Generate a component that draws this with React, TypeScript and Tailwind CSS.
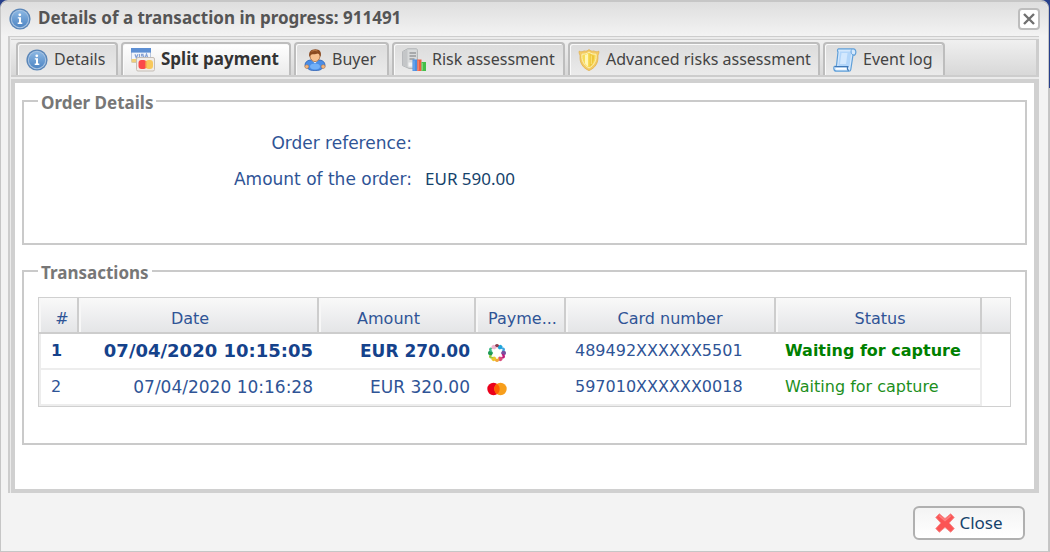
import type { ReactNode } from 'react';
import clsx from 'clsx';

const InfoIcon = () => (
  <svg viewBox="0 0 22 22" className="size-[22px] shrink-0" aria-hidden="true">
    <defs>
      <linearGradient id="info" x1="0" y1="0" x2="0" y2="1">
        <stop offset="0" stopColor="#8ab6e2" />
        <stop offset="1" stopColor="#4f86c4" />
      </linearGradient>
    </defs>
    <circle cx="11" cy="11" r="10.6" fill="#5a86b8" />
    <circle cx="11" cy="11" r="9.2" fill="#a9c4e2" />
    <circle cx="11" cy="11" r="8.2" fill="url(#info)" />
    <circle cx="10.800" cy="6.800" r="1.400" fill="#fff" />
    <path d="M8.800 9.200h3.200v5.400h1.300v1.400H8.700v-1.400h1.300v-4H8.800z" fill="#fff" />
  </svg>
);

const CardsIcon = () => (
  <svg viewBox="0 0 24 24" className="size-6 shrink-0" aria-hidden="true">
    <rect x="0.5" y="0.5" width="19" height="14" rx="1" fill="#f3f6fb" stroke="#b9c7de" />
    <path d="M0 0h20v4.6H0z" fill="#5d8fd3" />
    <path d="M.5 11h19v3.5H.5z" fill="#f0cf78" />
    <path d="M4 6.2l1.3 3.6 1.6-3.6M8.5 6v4M12.6 6.4h-2v1.5h2v1.7h-2.2M14 10l1.5-4 1.4 4" fill="none" stroke="#86a2d4" strokeWidth="1.2" />
    <rect x="5.5" y="9.5" width="18" height="13.5" rx="1.5" fill="#f1ede8" stroke="#c4bdb6" />
    <rect x="7.500" y="12" width="8" height="9" rx="3" fill="#fb4a4a" />
    <rect x="14.500" y="12" width="7.500" height="9" rx="3" fill="#f8c95c" />
    <path d="M14.800 13v7" stroke="#f98a48" strokeWidth="1.200" />
  </svg>
);

const BuyerIcon = () => (
  <svg viewBox="0 0 22 22" className="size-[22px] shrink-0" aria-hidden="true">
    <path d="M1 16.5C1 12.5 4 11 7.5 11h7c3.500 0 6.500 1.500 6.500 5.500 0 1.500-1 2.500-2.500 2.500-1 2-4 2.600-7.500 2.600S4.500 21 3.500 19C2 19 1 18 1 16.500z" fill="#4a8de6" stroke="#2e62b4" strokeWidth=".8" />
    <path d="M6 17.500c0-2 2-3 5-3s5 1 5 3-2 3-5 3-5-1-5-3z" fill="#73b0f7" />
    <circle cx="2.800" cy="17.600" r="1.900" fill="#f3b57d" stroke="#b9733b" strokeWidth=".5" />
    <circle cx="19.200" cy="17.600" r="1.900" fill="#f3b57d" stroke="#b9733b" strokeWidth=".5" />
    <path d="M7.500 11L11 14.200 14.500 11z" fill="#fff" />
    <ellipse cx="11" cy="7.300" rx="4.900" ry="5.300" fill="#f7c08e" stroke="#9a5a2a" strokeWidth=".7" />
    <path d="M5.400 8C4.200 3 7 .3 11.400.3c4.200 0 6.600 2.700 5.200 7.700-.6-1.800-1.500-3-2.600-3.500C11.500 5.500 7.500 5 6.600 6z" fill="#8a4a20" />
    <path d="M7.500 2.600c1.600-1.300 4-1.400 6-.6" stroke="#bd7a45" fill="none" />
  </svg>
);

const RiskIcon = () => (
  <svg viewBox="0 0 24 24" className="size-6 shrink-0" aria-hidden="true">
    <path d="M.6 3.600L5.500.8H14c1 0 1.400.6 1.400 1.400v18.200H7L.6 17.600z" fill="#d8dadb" stroke="#b0b3b5" />
    <path d="M.8 3.800L5.500 1.200v18.600l-4.700-2.200z" fill="#c4c6c8" />
    <path d="M7.500 5h6.500M7.500 8h6.500M7.500 11h5" stroke="#96999c" strokeWidth="1.400" />
    <path d="M6.500 14.500h4v4h-4z" fill="#f3f3f3" />
    <path d="M10.500 11.500h4.800V23h-4.800z" fill="#4b8fe2" />
    <path d="M15.300 11.500h4.200V23h-4.200z" fill="#ee5f45" />
    <path d="M19.500 14H24v9h-4.500z" fill="#45bf49" />
    <path d="M12 12.500v10" stroke="#7fb2f0" />
    <path d="M16.300 12.500v10" stroke="#f58d76" />
    <path d="M20.500 15v7.500" stroke="#7ad878" />
  </svg>
);

const ShieldIcon = () => (
  <svg viewBox="0 0 22 22" className="size-[22px] shrink-0" aria-hidden="true">
    <path d="M1.200 2.200c2 .9 3.600.7 4.800-.3C7.700 2.500 9.500 2 11 .6c1.500 1.400 3.300 1.900 5 1.300 1.200 1 2.800 1.200 4.800.3.400 2.200-.6 3-.9 4.600C20.600 14 17 19 11 21.600 5 19 1.400 14 2.100 6.800 1.800 5.200.8 4.400 1.200 2.200z" fill="#f3cb62" stroke="#e2b04c" strokeWidth=".8" />
    <path d="M4 5.200c3 .1 5-.6 7-2.200 2 1.600 4 2.300 7 2.200.8 6-1.800 11-7 13.800C5.800 16.200 3.200 11.200 4 5.200z" fill="#f7dc58" stroke="#fdf0b8" />
    <path d="M7 6v8.500c1 1.400 2 2.300 3 3V4.700C9 5.400 8 5.800 7 6z" fill="#fff6b8" />
    <path d="M11.600 4.500v13.600c2.600-2 4.600-5.500 4.600-11.600-1.800-.2-3.200-.9-4.600-2z" fill="#efc53a" />
    <path d="M13.300 6.500v8.500" stroke="#fbe57b" />
  </svg>
);

const ScrollIcon = () => (
  <svg viewBox="0 0 24 24" className="size-6 shrink-0" aria-hidden="true">
    <path d="M5.500.8h15c2.400 0 3.200 4.400 1.200 6.400L20 7l-2.200 14.500c-.2 1.200-.8 1.700-1.800 1.700H3.500C0 23.200.6 18.600 1.600 18.300h1.800L5 4C4.200 2.600 4.400 1.400 5.500.8z" fill="#d5e8fc" stroke="#5f9fd8" strokeWidth="1.200" />
    <path d="M7 3.500h11.400L16.500 18H5.300z" fill="#b3d6fa" />
    <path d="M8.500 5h6L13 16H7z" fill="#d3e8fe" />
    <path d="M1.800 18.600h13c-.8 1.500-.5 3 .8 4.200" fill="none" stroke="#3f78b8" strokeWidth="1.200" />
    <path d="M3 20.800h10.500" stroke="#fff" strokeWidth="1.500" />
    <path d="M18.800 1.300c-1.300 1.500-1 4.200 1 5.700" fill="none" stroke="#66a4de" />
  </svg>
);

const CrossIcon = () => (
  <svg viewBox="0 0 20 20" className="size-5 shrink-0" aria-hidden="true">
    <path d="M4.300.8L10 5.600 15.700.8l3.500 3.600L14.200 10l5 5.600-3.500 3.600L10 14.400l-5.700 4.800L.8 15.600l5-5.600-5-5.600z" fill="#fb5454" stroke="#f58b8b" strokeWidth="1" strokeLinejoin="round" />
    <path d="M4.300 2.600l5.700 5 5.700-5" fill="none" stroke="#fd8080" strokeWidth="1.500" />
  </svg>
);

const petals = ['#8e3a4c', '#1fa6dc', '#3fa6e0', '#7a4fa0', '#c2187c', '#d94f7c', '#f2a63a', '#ecc62c', '#9cc83c', '#1d9a54', '#3fb98a', '#efb5cf'];

const RingIcon = () => (
  <svg viewBox="0 0 20 20" className="mt-[3px] size-5" role="img" aria-label="Multicolour card">
    {petals.map((c, i) => (
      <ellipse key={c} cx="10" cy="3.700" rx="2.200" ry="2.700" fill={c} transform={`rotate(${i * 30} 10 10)`} />
    ))}
    <path d="M10 4.200l1.700 2.800 3.500-.4-1.700 3.400 1.700 3.400-3.500-.4L10 15.800l-1.700-2.800-3.500.4L6.500 10 4.800 6.600l3.500.4z" fill="#fff" stroke="#fff" />
  </svg>
);

const MastercardIcon = () => (
  <svg viewBox="0 0 20 20" className="mt-[3px] size-5" role="img" aria-label="Mastercard">
    <circle cx="6.500" cy="10" r="6.200" fill="#eb001b" />
    <circle cx="13.500" cy="10" r="6.200" fill="#f79e1b" />
    <path d="M10 4.900a6.200 6.200 0 0 1 0 10.200 6.200 6.200 0 0 1 0-10.200z" fill="#ff5f00" />
  </svg>
);

const tabs = [
  { label: 'Details', icon: InfoIcon, width: 'w-[102px]' },
  { label: 'Split payment', icon: CardsIcon, width: 'w-[170px]', active: true },
  { label: 'Buyer', icon: BuyerIcon, width: 'w-[95px]' },
  { label: 'Risk assessment', icon: RiskIcon, width: 'w-[173px]' },
  { label: 'Advanced risks assessment', icon: ShieldIcon, width: 'w-[252px]' },
  { label: 'Event log', icon: ScrollIcon, width: 'w-[122px]' },
];

const columns = [
  { title: '#', width: 'w-[40px]', align: 'text-center pl-2' },
  { title: 'Date', width: 'w-[240px]', align: 'text-center pr-4' },
  { title: 'Amount', width: 'w-[157px]', align: 'text-center pr-4' },
  { title: 'Payme...', width: 'w-[90px]', align: 'text-left pl-3' },
  { title: 'Card number', width: 'w-[210px]', align: 'text-center' },
  { title: 'Status', width: 'w-[206px]', align: 'text-center pl-1' },
];

const transactions = [
  { id: 1, date: '07/04/2020 10:15:05', amount: 'EUR 270.00', icon: RingIcon, card: '489492XXXXXX5501', status: 'Waiting for capture', bold: true },
  { id: 2, date: '07/04/2020 10:16:28', amount: 'EUR 320.00', icon: MastercardIcon, card: '597010XXXXXX0018', status: 'Waiting for capture', bold: false },
];

function Group({ title, className, children }: { title: string; className?: string; children: ReactNode }) {
  return (
    <fieldset className={clsx('min-w-0 border-2 border-[#cacaca]', className)}>
      <legend className="ml-[14px] px-[3px] pt-1 text-[17px] leading-6 font-bold text-[#777]">{title}</legend>
      {children}
    </fieldset>
  );
}

function TransactionTable() {
  return (
    <div className="mx-[14px] mt-3 border border-[#d0d0d0] font-['DejaVu_Sans',sans-serif] text-base text-[#2f5496]">
      <table className="w-full table-fixed border-separate border-spacing-0">
        <thead>
          <tr className="h-9 bg-linear-to-b from-[#f9f9f9] to-[#e3e4e6]">
            {columns.map((c) => (
              <th key={c.title} scope="col" className={clsx('border-r-2 border-b-2 border-[#cdcdcd] pt-[7px] font-normal whitespace-nowrap shadow-[inset_2px_0_#f7f7f7]', c.width, c.align)}>
                {c.title}
              </th>
            ))}
            <td className="border-b-2 border-[#cdcdcd]" />
          </tr>
        </thead>
        <tbody>
          {transactions.map((t) => (
            <tr key={t.id} className={clsx('h-9 whitespace-nowrap *:border-b-2 *:border-[#ededed]', t.bold && 'font-bold text-[#15428b]')}>
              <td className="border-l-2 pl-[10px]">{t.id}</td>
              <td className={clsx('pr-[6px] text-right', t.bold ? 'text-lg leading-6' : 'text-[17px] leading-6')}>{t.date}</td>
              <td className="pr-[6px] text-right text-[17px] leading-6">{t.amount}</td>
              <td className="pl-[11px]"><t.icon /></td>
              <td className="pl-[9px] font-normal text-[#2f5496]">{t.card}</td>
              <td className={clsx('border-r-2 pl-[9px]', t.bold ? 'text-[#008000]' : 'text-[#1c8f1c]')}>{t.status}</td>
              <td className="border-none!" />
            </tr>
          ))}
        </tbody>
      </table>
    </div>
  );
}

export default function App() {
  return (
    <div className="bg-[linear-gradient(#27408b_88px,#c4c4c4_88px)] pr-px font-['Noto_Sans',sans-serif] text-base">
      <section role="dialog" aria-labelledby="dialog-title" className="flex min-h-screen flex-col rounded-t-lg border border-t-2 border-[#c6c6c6] bg-[#f3f3f3] px-[7px]">
        <header className="-mx-[7px] flex h-[34px] items-center gap-[7px] rounded-t-lg bg-linear-to-b from-[#dedede] to-[#f3f3f3] px-[8px]">
          <InfoIcon />
          <h1 id="dialog-title" className="flex-1 pb-0.5 text-[17px] leading-6 font-bold text-[#555]">Details of a transaction in progress: 911491</h1>
          <button type="button" aria-label="Close dialog" className="flex size-[22px] items-center justify-center rounded border-2 border-[#bdbdbd] bg-white">
            <svg viewBox="0 0 12 12" className="size-3" aria-hidden="true">
              <path d="M1 1l10 10M11 1L1 11" stroke="#707070" strokeWidth="2.400" />
            </svg>
          </button>
        </header>

        <div className="mr-[2px] border-t border-l-2 border-[#cdcdcd] bg-[#ebebeb] pt-[2px] pl-px">
          <div role="tablist" className="flex h-9 items-end gap-[3px] border-t border-r-[3px] border-[#cdcdcd] bg-linear-to-b from-[#f0f0f0] to-[#d8d8d8] pl-[5px]">
            {tabs.map((t) => (
              <button
                key={t.label}
                type="button"
                role="tab"
                aria-selected={!!t.active}
                className={clsx(
                  'flex h-[33px] items-center gap-[6px] rounded-t border-2 border-b-0 border-[#bdbdbd] pl-2 whitespace-nowrap shadow-[inset_1px_1px_#fafafa]',
                  t.width,
                  t.active ? 'bg-linear-to-b from-white to-[#ebebeb] text-[17px] font-bold text-[#333]' : 'bg-linear-to-b from-[#dcdcdc] to-[#ebebeb] text-[#444]',
                )}
              >
                <t.icon />
                <span className="pb-0.5 leading-6">{t.label}</span>
              </button>
            ))}
          </div>
          <div className="h-1 border-t-2 border-[#cdcdcd]" />

          <main className="border-4 border-r-[5px] border-[#d0d0d0] bg-white px-[7px] pt-1 pb-[44px]">
            <Group title="Order Details" className="pt-[10px] pb-[46px]">
              <dl className="grid grid-cols-[388px_1fr] gap-x-[13px] text-[17px] leading-9">
                <dt className="text-right font-['DejaVu_Sans',sans-serif] text-[#2f5496]">Order reference:</dt>
                <dd className="text-[#15426b]" />
                <dt className="text-right font-['DejaVu_Sans',sans-serif] text-[#2f5496]">Amount of the order:</dt>
                <dd className="text-[#15426b]">EUR 590.00</dd>
              </dl>
            </Group>
            <Group title="Transactions" className="mt-3 pb-[36px]">
              <TransactionTable />
            </Group>
          </main>
        </div>

        <footer className="flex justify-end px-4 pt-[13px] pb-[10px]">
          <button type="button" className="flex h-[34px] w-[112px] items-center justify-center gap-1 rounded-md border-2 border-[#b0b0b0] bg-linear-to-b from-[#f4f4f4] to-white text-[17px] text-[#15426b]">
            <CrossIcon />
            Close
          </button>
        </footer>
      </section>
    </div>
  );
}
